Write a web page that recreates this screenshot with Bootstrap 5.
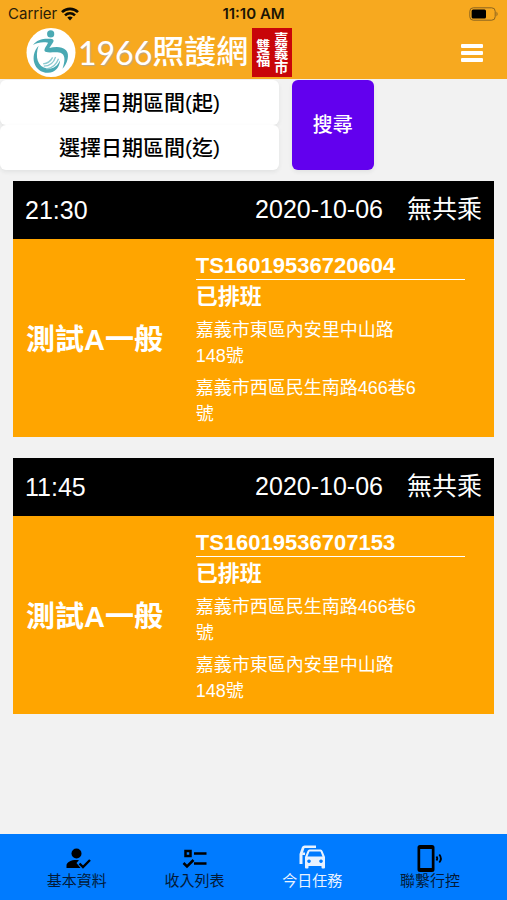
<!DOCTYPE html>
<html lang="zh-Hant">
<head>
<meta charset="utf-8">
<meta name="viewport" content="width=device-width, initial-scale=1">
<title>今日任務</title>
<link href="https://cdn.jsdelivr.net/npm/bootstrap@5.3.0/dist/css/bootstrap.min.css" rel="stylesheet">
<style>
  body { background: #f2f2f2; font-family: "Liberation Sans", "Noto Sans CJK TC", sans-serif; }
  .app-top { background: #f7a91f; }
  .status-bar { height: 26px; font: 15px/28px Inter, sans-serif; color: #2a2008; }
  .status-bar .clock { font-weight: 600; color: #1c1505; }
  .brand-row { height: 53px; padding-left: 26px; padding-right: 24px; }
  .brand-no { font: 400 32px/49px Lato, sans-serif; color: #fff; text-shadow: 1px 1px 1px #b9a68a; margin-left: 2px; }
  .brand-name { font-size: 32px; font-weight: 500; line-height: 49px; color: #fff; }
  .seal { width: 40px; height: 49px; background: #c80509; color: #fff; font: 700 14px/18px "Noto Sans CJK TC", sans-serif; }
  .seal span { writing-mode: vertical-rl; }
  .date-col { width: 55%; }
  .filter-row { gap: 13px; padding-top: 1px; }
  .date-btn { height: 45px; font-size: 21px; font-weight: 500; line-height: 24px; }
  .date-btn, .date-btn:hover { background: #fff; color: #000; }
  .search-btn { width: 82px; font-size: 20px; font-weight: 500; }
  .search-btn, .search-btn:hover { background: #6200ee; color: #fff; }
  .task-list { padding: 11px 13px 20px; gap: 21px; }
  .task-head { height: 58px; padding: 0 12px; font-size: 25px; line-height: 30px; }
  .task-head .ride { gap: 24px; padding-bottom: 3px; }
  .task-body { background: #ffa500; padding: 14px 0 10px; color: #fff; line-height: 26px; }
  .task-name { width: 38%; padding-left: 13px; font-size: 29px; }
  .task-info { width: 56%; }
  .task-no { font-size: 22px; border-bottom: 1px solid #fff; }
  .task-state { font-size: 22px; margin: 4px 0 7px; }
  .task-addr { font-size: 18px; max-width: 225px; margin-bottom: 6px; }
  .tabs { background: #007bff; height: 66px; padding: 0 18px; font-size: 15px; line-height: 18px; }
  .tabs a { color: #031a38; padding-top: 10px; }
  .tabs a.active { color: #e8f2ff; }
</style>
<script src="https://cdn.jsdelivr.net/npm/bootstrap@5.3.0/dist/js/bootstrap.bundle.min.js"></script>
</head>
<body class="d-flex flex-column min-vh-100">
<header class="app-top">
  <div class="status-bar row g-0 px-2">
    <div class="col d-flex align-items-center gap-1">
      <span>Carrier</span>
      <svg width="18" height="14" viewBox="0 0 18 14" fill="none" stroke="#0d0a02" stroke-width="2.6" aria-hidden="true"><path d="M1 5.2C5.500 .7 12.500 .7 17 5.200M4 8.400c2.900-2.700 7.100-2.700 10 0"/><path d="M6.300 10.600c1.600-1.400 3.800-1.400 5.400 0L9 13.400z" fill="#0d0a02" stroke="none"/></svg>
    </div>
    <div class="col-auto clock">11:10 AM</div>
    <div class="col d-flex align-items-center justify-content-end">
      <svg width="30" height="14" viewBox="0 0 30 14" aria-hidden="true"><rect x=".8" y=".8" width="25.400" height="12.400" rx="3.500" fill="none" stroke="#8a6420"/><rect x="2.600" y="2.600" width="14.400" height="8.800" rx="1.500"/><path d="M27.500 4.500q2.200 2.500 0 5z" fill="#8a6420"/></svg>
    </div>
  </div>
  <nav class="brand-row d-flex align-items-center justify-content-between">
    <a href="#" class="d-flex align-items-center text-decoration-none">
      <svg width="50" height="49" viewBox="16 14 152 150" aria-hidden="true">
        <circle cx="92" cy="89" r="75" fill="#fff"/>
        <g fill="#4aa9b3">
          <circle cx="91" cy="32" r="11"/>
          <path d="M37 66C48 50 68 45 91 47C101 48 102 54 97 60L87 75C103 72 125 69 138 82C150 94 143 123 127 139C134 119 137 99 125 92C111 84 91 92 75 87C69 84 73 76 79 67L83 59C65 56 50 59 37 66Z"/>
          <path d="M54 68C25 99 39 151 83 151C106 151 118 134 120 113C110 133 97 141 80 138C51 133 42 102 54 68Z"/>
        </g>
        <path d="M70 131Q97 131 106 103M78 139Q105 136 115 108M68 124Q88 122 97 104" fill="none" stroke="#8bcad0" stroke-width="4"/>
      </svg>
      <span class="brand-no">1966</span>
      <span class="brand-name me-1">照護網</span>
      <span class="seal d-flex justify-content-center align-items-center"><span>雙福</span><span>嘉義市</span></span>
    </a>
    <button type="button" class="btn p-0 border-0 d-flex" aria-label="選單">
      <svg width="22" height="20" viewBox="0 0 22 20" fill="#fff"><rect y="1" width="22" height="4" rx="1"/><rect y="8" width="22" height="4" rx="1"/><rect y="15" width="22" height="4" rx="1"/></svg>
    </button>
  </nav>
</header>

<main class="flex-grow-1">
  <form class="filter-row d-flex">
    <div class="date-col d-flex flex-column">
      <button type="button" class="btn date-btn border-0 shadow-sm p-0">選擇日期區間(起)</button>
      <button type="button" class="btn date-btn border-0 shadow-sm p-0">選擇日期區間(迄)</button>
    </div>
    <button type="button" class="btn search-btn border-0 shadow-sm p-0">搜尋</button>
  </form>

  <div class="task-list d-flex flex-column">
    <article>
      <div class="task-head bg-black text-white d-flex align-items-center justify-content-between">
        <time>21:30</time>
        <div class="ride d-flex"><span>2020-10-06</span><span>無共乘</span></div>
      </div>
      <div class="task-body d-flex">
        <div class="task-name fw-bold d-flex align-items-center">測試A一般</div>
        <div class="task-info">
          <div class="task-no fw-bold">TS16019536720604</div>
          <div class="task-state fw-bold">已排班</div>
          <div class="task-addr">嘉義市東區內安里中山路148號</div>
          <div class="task-addr mb-0">嘉義市西區民生南路466巷6號</div>
        </div>
      </div>
    </article>
    <article>
      <div class="task-head bg-black text-white d-flex align-items-center justify-content-between">
        <time>11:45</time>
        <div class="ride d-flex"><span>2020-10-06</span><span>無共乘</span></div>
      </div>
      <div class="task-body d-flex">
        <div class="task-name fw-bold d-flex align-items-center">測試A一般</div>
        <div class="task-info">
          <div class="task-no fw-bold">TS16019536707153</div>
          <div class="task-state fw-bold">已排班</div>
          <div class="task-addr">嘉義市西區民生南路466巷6號</div>
          <div class="task-addr mb-0">嘉義市東區內安里中山路148號</div>
        </div>
      </div>
    </article>
  </div>
</main>

<nav class="tabs d-flex sticky-bottom">
  <a href="#" class="col text-decoration-none d-flex flex-column align-items-center">
    <svg width="28" height="28" viewBox="0 0 28 28" aria-hidden="true"><circle cx="13.500" cy="9.500" r="5" fill="#000"/><path d="M3.500 24v-2.500c0-3.500 5-5.500 9.500-5.500 1 0 2 .1 3 .3L13.500 19l4 5z" fill="#000"/><path d="M16.500 19.500l3.500 3.500 7-7" fill="none" stroke="#000" stroke-width="2.400"/></svg>
    <span>基本資料</span></a>
  <a href="#" class="col text-decoration-none d-flex flex-column align-items-center">
    <svg width="28" height="28" viewBox="0 0 28 28" fill="none" stroke="#000" stroke-width="2.500" aria-hidden="true"><path d="M4.500 7h5v5h-5zM13 9.500h12.500M13 19.500h12.500M2.500 19l3.500 3.500 6.500-6.500"/></svg>
    <span>收入列表</span></a>
  <a href="#" class="col text-decoration-none d-flex flex-column align-items-center active" aria-current="page">
    <svg width="28" height="28" viewBox="0 2 28 28" aria-hidden="true"><path d="M18 3.500H6.500Q4.800 3.500 4 5L1.500 12V22H4.500V12L6.500 6H18z" fill="#e8f2ff"/><path d="M4.500 10.500H7v2.500H4z" fill="#e8f2ff"/><path fill-rule="evenodd" fill="#e8f2ff" d="M11.500 7.500h11q1.500 0 2 1.500L27 15v10.500q0 1-1 1h-1.500q-1 0-1-1V24h-13v1.500q0 1-1 1H8q-1 0-1-1V15l2.500-6q.5-1.500 2-1.500zM11.500 9.500 9.500 14.500h15L22.500 9.500zM11 17.400a1.800 1.800 0 1 0 .01 0zM23 17.400a1.800 1.800 0 1 0 .01 0z"/></svg>
    <span>今日任務</span></a>
  <a href="#" class="col text-decoration-none d-flex flex-column align-items-center">
    <svg width="28" height="28" viewBox="0 0 28 28" aria-hidden="true"><path fill-rule="evenodd" d="M4 1h12q2.500 0 2.500 2.500v22q0 2.500-2.500 2.500H4q-2.500 0-2.500-2.500v-22Q1.500 1 4 1zM4.200 5v19h11.600V5z"/><path d="M20.500 12.500q1.500 2 0 4M23.300 10.500q3.200 4 0 8" fill="none" stroke="#000" stroke-width="1.800"/></svg>
    <span>聯繫行控</span></a>
</nav>
</body>
</html>
